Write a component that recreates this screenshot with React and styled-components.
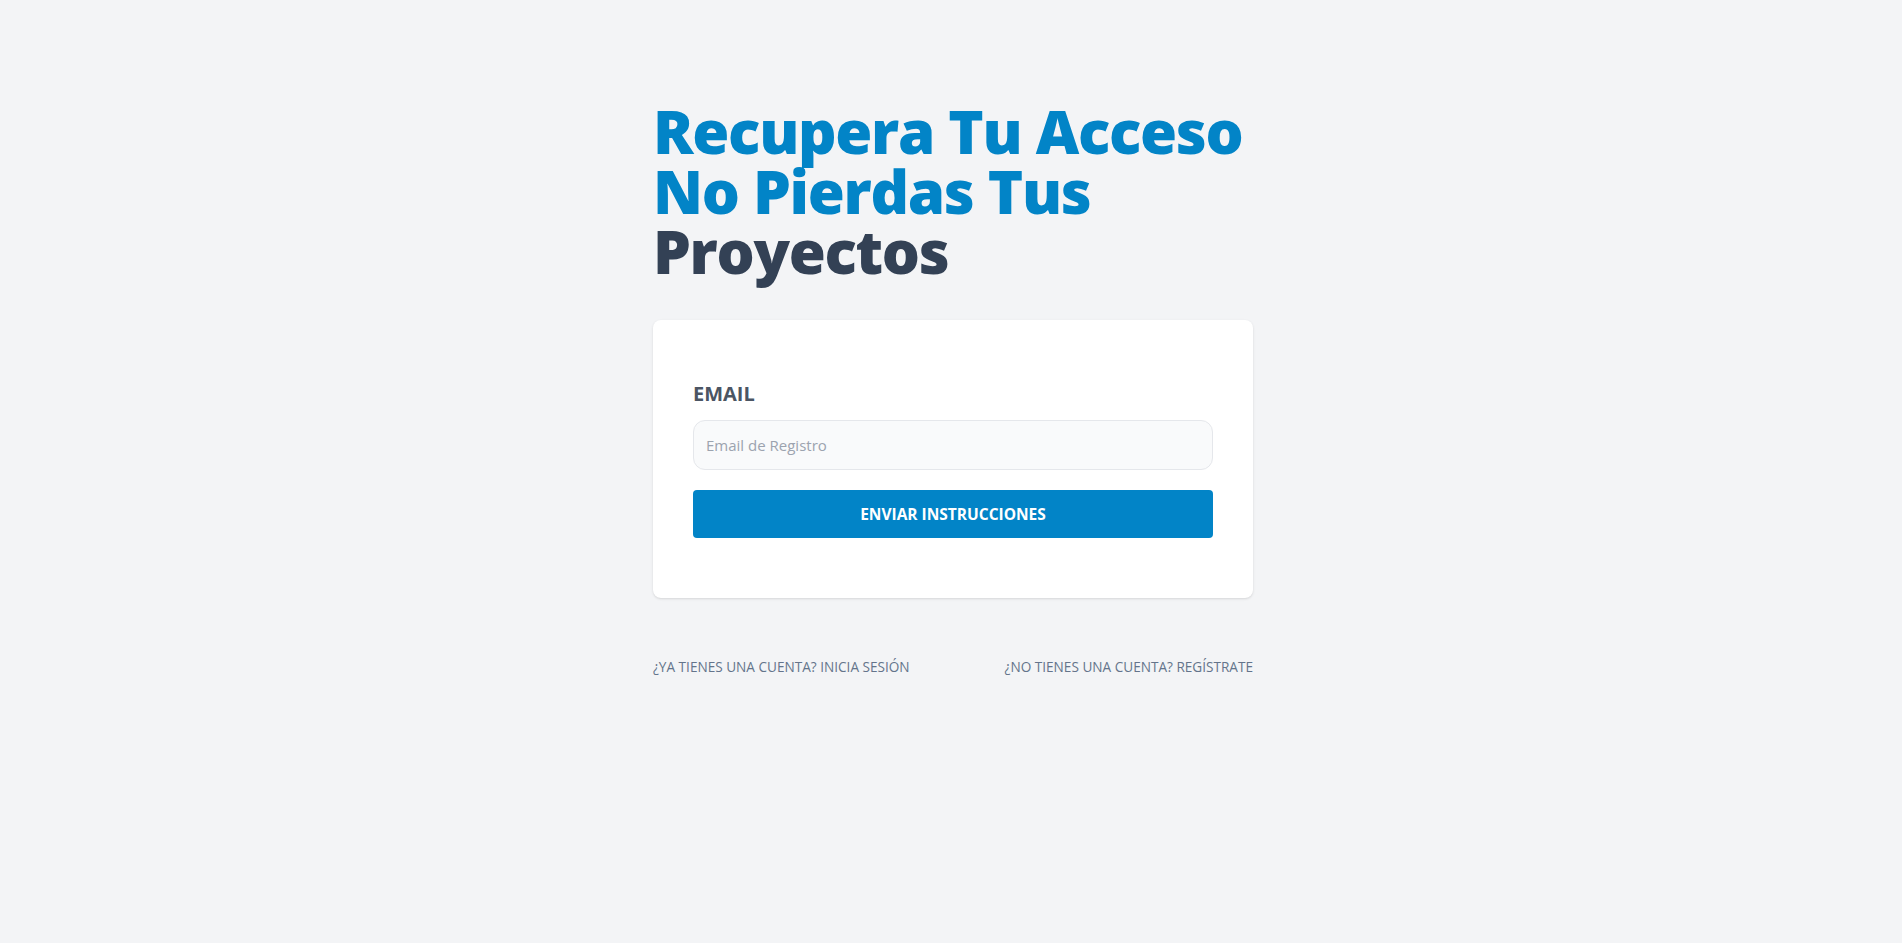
import styled, { createGlobalStyle } from "styled-components";

const GlobalStyle = createGlobalStyle`
  html, body {
    margin: 0;
    padding: 0;
    background-color: #f3f4f6;
    font-family: "Open Sans", "Noto Sans", sans-serif;
  }
  * {
    box-sizing: border-box;
  }
`;

const App = () => {
  return (
    <>
      <GlobalStyle />
      <Main>
        <Container>
          <Title>
            Recupera Tu Acceso
            <br />
            No Pierdas Tus
            <br />
            <span>Proyectos</span>
          </Title>
          <Form onSubmit={(e) => e.preventDefault()}>
            <Field>
              <Label htmlFor="email">Email</Label>
              <Input id="email" type="email" placeholder="Email de Registro" />
            </Field>
            <Submit type="submit" value="Enviar Instrucciones" />
          </Form>
          <Nav>
            <NavLink href="#">¿Ya tienes una cuenta? Inicia Sesión</NavLink>
            <NavLink href="#">¿No tienes una cuenta? Regístrate</NavLink>
          </Nav>
        </Container>
      </Main>
    </>
  );
};

const Main = styled.main`
  min-height: 943px;
  display: flex;
  justify-content: center;
  padding: 101px 0 0 4px;
`;

const Container = styled.div`
  width: 600px;
`;

const Title = styled.h1`
  margin: 0;
  color: #0284c7;
  font-family: "Open Sans", sans-serif;
  font-weight: 800;
  font-size: 60px;
  line-height: 60px;
  letter-spacing: -1.3px;
  white-space: nowrap;
  span {
    color: #334155;
  }
`;

const Form = styled.form`
  margin-top: 39px;
  background-color: #ffffff;
  border-radius: 8px;
  box-shadow: 0 1px 3px 0 rgba(0, 0, 0, 0.1), 0 1px 2px -1px rgba(0, 0, 0, 0.1);
  padding: 40px;
`;

const Field = styled.div`
  margin: 20px 0;
  display: flex;
  flex-direction: column;
`;

const Label = styled.label`
  text-transform: uppercase;
  color: #4b5563;
  font-size: 20px;
  line-height: 28px;
  font-weight: 700;
`;

const Input = styled.input`
  margin-top: 12px;
  width: 100%;
  height: 50px;
  padding: 12px;
  border: 1px solid #e5e7eb;
  border-radius: 12px;
  background-color: #f9fafb;
  font-family: inherit;
  font-size: 15px;
  color: #374151;
  outline: none;
  &::placeholder {
    color: #9ca3af;
  }
`;

const Submit = styled.input`
  display: block;
  width: 100%;
  height: 48px;
  margin-bottom: 20px;
  border: none;
  border-radius: 4px;
  background-color: #0284c7;
  color: #ffffff;
  font-family: inherit;
  font-size: 15.5px;
  font-weight: 700;
  text-transform: uppercase;
  cursor: pointer;
  &:hover {
    background-color: #0369a1;
  }
`;

const Nav = styled.nav`
  margin-top: 59px;
  display: flex;
  justify-content: space-between;
`;

const NavLink = styled.a`
  color: #64748b;
  font-size: 13.6px;
  line-height: 20px;
  text-transform: uppercase;
  text-decoration: none;
`;

export default App;
